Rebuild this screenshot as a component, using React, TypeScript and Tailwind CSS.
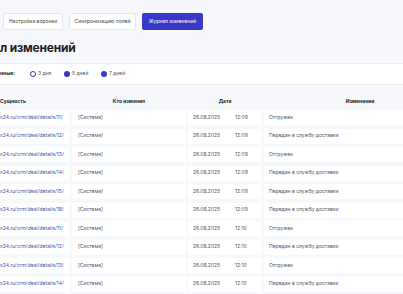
import React from "react";

const rows = [
  { id: 11, time: "12:09", change: "Отгружен" },
  { id: 12, time: "12:09", change: "Передан в службу доставки" },
  { id: 13, time: "12:09", change: "Отгружен" },
  { id: 14, time: "12:09", change: "Передан в службу доставки" },
  { id: 15, time: "12:09", change: "Передан в службу доставки" },
  { id: 18, time: "12:09", change: "Передан в службу доставки" },
  { id: 11, time: "12:10", change: "Отгружен" },
  { id: 12, time: "12:10", change: "Передан в службу доставки" },
  { id: 13, time: "12:10", change: "Отгружен" },
  { id: 14, time: "12:10", change: "Передан в службу доставки" },
];

export default function App() {
  return (
    <div className="w-[403px] h-[294px] overflow-hidden bg-[#f7f8fc] font-['Inter',sans-serif] text-[#333]">
      <div className="flex gap-[6px] pl-[3px] pt-[13px]">
        <div className="h-[17px] w-[60px] flex items-center justify-center rounded-[2px] border border-[#e6e8ee] bg-white text-[5px] text-[#444]">
          Настройка воронки
        </div>
        <div className="h-[17px] w-[67px] flex items-center justify-center rounded-[2px] border border-[#e6e8ee] bg-white text-[5px] text-[#444]">
          Синхронизацию полей
        </div>
        <div className="h-[17px] w-[61px] flex items-center justify-center rounded-[2px] bg-[#3838c9] text-[5px] text-white">
          Журнал изменений
        </div>
      </div>
      <div className="mt-[10px] h-[16px] leading-[16px] text-[12px] tracking-[-0.2px] font-bold text-[#1c1c24]">
        л изменений
      </div>
      <div className="mt-[7px] h-[22px] bg-white border-y border-[#eceef4] flex items-center text-[5px]">
        <span className="font-bold text-[#222] w-[30px]">нные:</span>
        <span className="flex items-center gap-[2px] w-[34px]">
          <span className="w-[6px] h-[6px] rounded-full border-[1.5px] border-[#3838c9] bg-white" />
          <span className="text-[#555]">3 дня</span>
        </span>
        <span className="flex items-center gap-[2px] w-[37px]">
          <span className="w-[6px] h-[6px] rounded-full bg-[#3838c9]" />
          <span className="text-[#555]">5 дней</span>
        </span>
        <span className="flex items-center gap-[2px]">
          <span className="w-[6px] h-[6px] rounded-full bg-[#3838c9]" />
          <span className="text-[#555]">7 дней</span>
        </span>
      </div>
      <div className="flex gap-[2px] h-[25px] pt-[12px] text-[5px] font-bold text-[#222] leading-[8px]">
        <div className="w-[70px] shrink-0">Сущность</div>
        <div className="w-[114px] shrink-0 text-center">Кто изменил</div>
        <div className="w-[74px] shrink-0 text-center">Дата</div>
        <div className="w-[192px] shrink-0 text-center">Изменение</div>
      </div>
      <div className="flex flex-col gap-[3.5px] text-[5px] text-[#555]">
        {rows.map((r, i) => (
          <div key={i} className="flex gap-[2px] h-[15px] shrink-0">
            <div className="w-[70px] shrink-0 bg-white flex items-center text-[#4b4f9e] whitespace-nowrap overflow-hidden">
              x24.ru/crm/deal/details/{r.id}/
            </div>
            <div className="w-[114px] shrink-0 bg-white flex items-center pl-[6px]">[Система]</div>
            <div className="w-[74px] shrink-0 bg-white flex items-center pl-[5px]">
              <span className="w-[42px]">26.08.2025</span>
              <span>{r.time}</span>
            </div>
            <div className="w-[192px] shrink-0 bg-white flex items-center pl-[5px] whitespace-nowrap">{r.change}</div>
          </div>
        ))}
      </div>
    </div>
  );
}
